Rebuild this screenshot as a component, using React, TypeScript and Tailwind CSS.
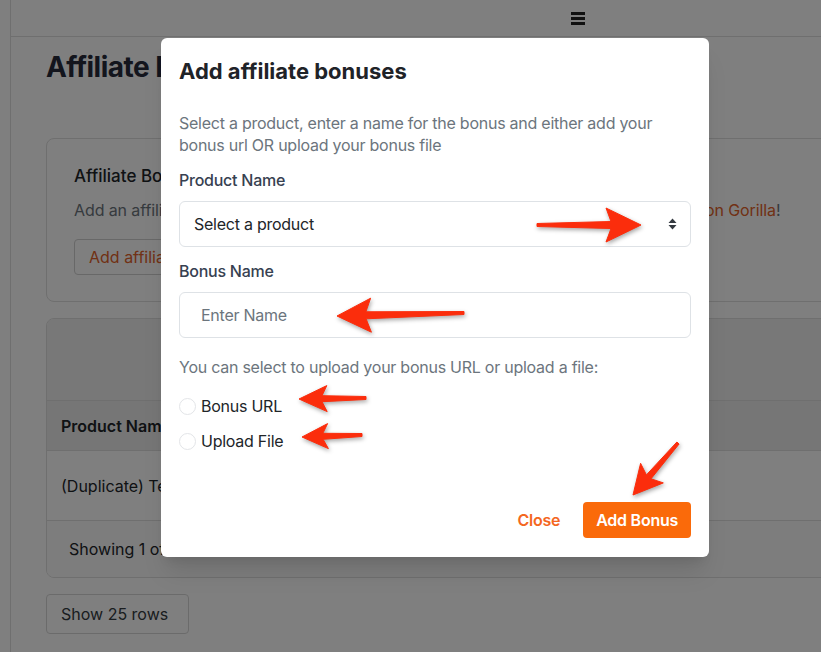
type Pt = [number, number]

function arrowPoints(tail: Pt, tip: Pt, headLen: number, headHalf: number, tailW: number, neckW: number) {
  const dx = tip[0] - tail[0]
  const dy = tip[1] - tail[1]
  const len = Math.hypot(dx, dy)
  const ux = dx / len
  const uy = dy / len
  const nx = -uy
  const ny = ux
  const base: Pt = [tip[0] - ux * headLen, tip[1] - uy * headLen]
  const neck: Pt = [tip[0] - ux * (headLen - 5), tip[1] - uy * (headLen - 5)]
  const pts: Pt[] = [
    [tail[0] + nx * tailW / 2, tail[1] + ny * tailW / 2],
    [neck[0] + nx * neckW / 2, neck[1] + ny * neckW / 2],
    [base[0] + nx * headHalf, base[1] + ny * headHalf],
    tip,
    [base[0] - nx * headHalf, base[1] - ny * headHalf],
    [neck[0] - nx * neckW / 2, neck[1] - ny * neckW / 2],
    [tail[0] - nx * tailW / 2, tail[1] - ny * tailW / 2],
  ]
  return pts.map((p) => `${p[0].toFixed(1)},${p[1].toFixed(1)}`).join(' ')
}

const arrows: { tail: Pt; tip: Pt; head: number; half: number; tw: number; nw: number }[] = [
  { tail: [537, 225], tip: [641, 225], head: 35, half: 17, tw: 3, nw: 7 },
  { tail: [464, 313], tip: [337, 316], head: 34, half: 17, tw: 3, nw: 7 },
  { tail: [366, 398], tip: [299, 399], head: 28, half: 13, tw: 3, nw: 6 },
  { tail: [362, 435], tip: [302, 437], head: 26, half: 12.5, tw: 3, nw: 6 },
  { tail: [678, 443], tip: [633, 495], head: 29, half: 15, tw: 3, nw: 6 },
]

function Radio({ label }: { label: string }) {
  return (
    <label className="flex h-[24px] items-center gap-[5px]">
      <span className="h-[17px] w-[17px] rounded-full border border-[#e3e5e8] bg-white" />
      <span className="text-[16px] text-[#212529]">{label}</span>
    </label>
  )
}

export default function App() {
  return (
    <div className="relative h-[652px] w-[821px] overflow-hidden bg-white font-['Inter',sans-serif]">
      {/* page behind the modal */}
      <div className="flex h-full">
        <aside className="w-[11px] shrink-0 border-r border-[#dedede] bg-white" />
        <div className="w-[900px] shrink-0">
          <header className="flex h-[37px] items-center border-b border-[#dedede]">
            <div className="ml-[560px] flex w-[14px] flex-col gap-[2px]">
              <span className="h-[3px] bg-[#222]" />
              <span className="h-[3px] bg-[#222]" />
              <span className="h-[3px] bg-[#222]" />
            </div>
          </header>

          <main className="pl-[35px]">
            <h1 className="mt-[12px] text-[28px] leading-[36px] font-bold tracking-[-0.5px] text-[#262a3b]">
              Affiliate Bonuses
            </h1>

            <section className="mt-[53px] rounded-[8px] border border-[#dedede] bg-white px-[27px] pt-[25px] pb-[26px]">
              <h2 className="text-[17px] leading-[24px] font-medium text-[#212529]">Affiliate Bonuses</h2>
              <p className="mt-[11px] text-[16px] leading-[22px] tracking-[-0.1px] text-[#6c757d]">
                Add an affiliate bonus to your products and give your affiliates more to promote with{' '}
                <span className="text-[#e2622a]">on Gorilla</span>!
              </p>
              <button className="mt-[18px] h-[36px] rounded-[4px] border border-[#d0d0d0] px-[14px] text-[16px] text-[#e2622a]">
                Add affiliate bonus
              </button>
            </section>

            <section className="mt-[16px] overflow-hidden rounded-[8px] border border-[#dedede] bg-white">
              <div className="h-[81px] bg-[#f0f0f0]" />
              <div className="flex h-[50px] items-center border-t border-[#dedede] bg-[#ededed] px-[14px]">
                <span className="text-[16px] font-semibold text-[#212529]">Product Name</span>
              </div>
              <div className="flex h-[70px] items-center border-t border-[#dedede] px-[14px]">
                <span className="text-[16px] text-[#212529]">(Duplicate) Test Product</span>
              </div>
              <div className="flex h-[57px] items-center border-t border-[#dedede] bg-[#fbfbfb] px-[22px]">
                <span className="text-[16px] text-[#212529]">Showing 1 of 1</span>
              </div>
            </section>

            <button className="mt-[16px] h-[40px] w-[143px] rounded-[4px] border border-[#d6d6d6] bg-white pl-[14px] text-left text-[16px] text-[#343a40]">
              Show 25 rows
            </button>
          </main>
        </div>
      </div>

      {/* modal */}
      <div className="absolute inset-0 bg-black/50">
        <div className="ml-[161px] mt-[38px] flex w-[548px] flex-col rounded-[6px] bg-white px-[18px] pt-[19px] pb-[19px] tracking-[-0.25px] shadow-xl">
          <h3 className="text-[22px] leading-[28px] font-bold tracking-[0px] text-[#1f2328]">
            Add affiliate bonuses
          </h3>

          <p className="mt-[27px] text-[16px] leading-[22px] text-[#6c757d]">
            Select a product, enter a name for the bonus and either add your bonus url OR upload your bonus file
          </p>

          <div className="mt-[12px] text-[16px] leading-[24px] font-medium text-[#374151]">Product Name</div>
          <div className="mt-[9px] flex h-[46px] items-center justify-between rounded-[6px] border border-[#dee2e6] pb-[1px] pl-[14px] pr-[13px]">
            <span className="text-[16px] text-[#212529]">Select a product</span>
            <svg width="9" height="12" viewBox="0 0 9 12">
              <path d="M4.5 0.5 L8.5 5 H0.5 Z" fill="#343a40" />
              <path d="M4.5 11.5 L8.5 7 H0.5 Z" fill="#343a40" />
            </svg>
          </div>

          <div className="mt-[12px] text-[16px] leading-[24px] font-medium text-[#374151]">Bonus Name</div>
          <input
            className="mt-[9px] h-[46px] rounded-[6px] border border-[#dee2e6] pl-[21px] text-[16px] text-[#212529] outline-none placeholder:text-[#6c757d]"
            placeholder="Enter Name"
          />

          <p className="mt-[18px] text-[16px] leading-[22px] text-[#6c757d]">
            You can select to upload your bonus URL or upload a file:
          </p>

          <div className="mt-[16px] flex flex-col gap-[11px]">
            <Radio label="Bonus URL" />
            <Radio label="Upload File" />
          </div>

          <div className="mt-[49px] flex items-center justify-end gap-[12px]">
            <button className="px-[11px] text-[16px] font-semibold text-[#f4671f]">Close</button>
            <button className="h-[36px] rounded-[4px] bg-[#fa6a0a] px-[13px] text-[16px] font-semibold text-white">
              Add Bonus
            </button>
          </div>
        </div>
      </div>

      {/* red annotation arrows */}
      <svg
        className="pointer-events-none absolute inset-0"
        width="821"
        height="652"
        style={{ filter: 'drop-shadow(1px 2px 2px rgba(0,0,0,0.35))' }}
      >
        {arrows.map((a, i) => (
          <polygon
            key={i}
            points={arrowPoints(a.tail, a.tip, a.head, a.half, a.tw, a.nw)}
            fill="#fb2d0c"
            strokeLinejoin="round"
            stroke="#fb2d0c"
            strokeWidth="1"
          />
        ))}
      </svg>
    </div>
  )
}
